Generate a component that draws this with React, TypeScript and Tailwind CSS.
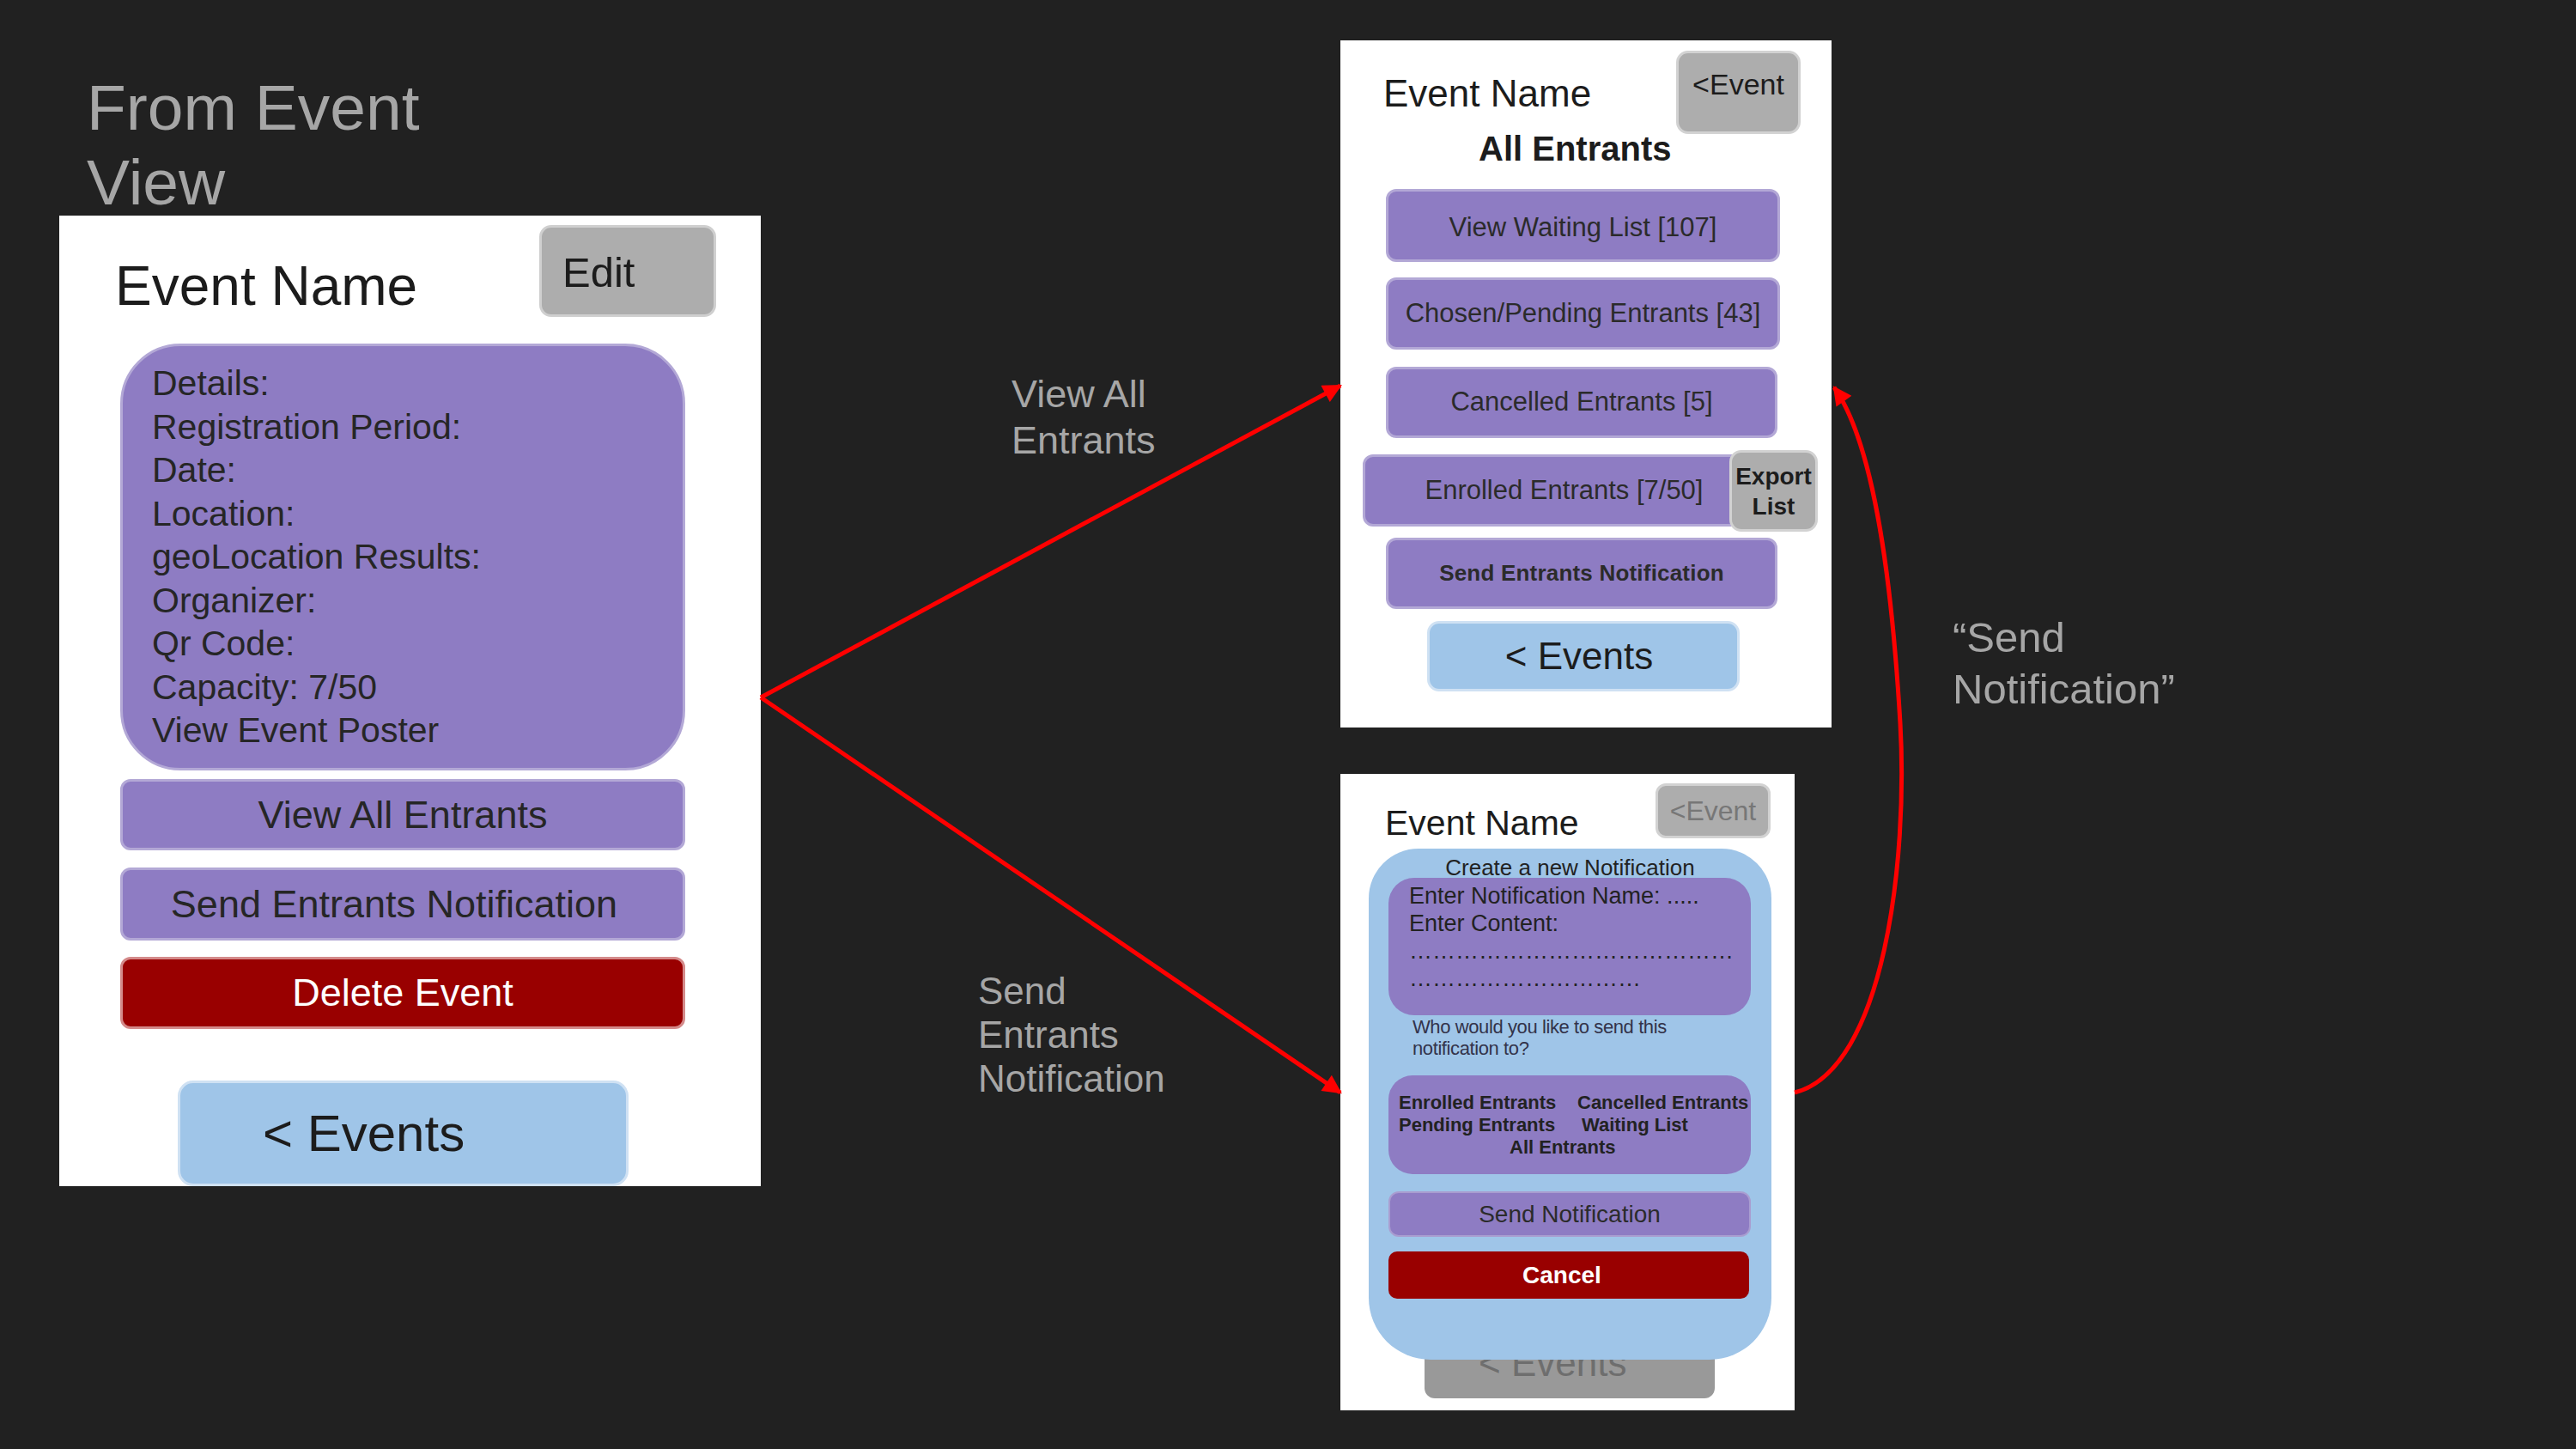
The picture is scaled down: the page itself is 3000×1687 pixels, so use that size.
const details = [
  'Details:',
  'Registration Period:',
  'Date:',
  'Location:',
  'geoLocation Results:',
  'Organizer:',
  'Qr Code:',
  'Capacity: 7/50',
  'View Event Poster',
];

// left: the event view screen with its title
function EventColumn() {
  return (
    <div className="ml-[69px] flex w-[817px] shrink-0 flex-col">
      <div className="mt-[82px] h-[169px] pl-[32px] text-[75px] leading-[87px] text-[#a6a6a6]">
        From Event
        <br />
        View
      </div>
      <div className="flex h-[1130px] flex-col bg-white">
        <div className="flex h-[118px] items-start">
          <div className="ml-[65px] mt-[50px] text-[64px] leading-none text-[#1c1c1c]">Event Name</div>
          <div className="ml-auto mr-[52px] mt-[11px] flex h-[107px] w-[206px] items-center rounded-[14px] border-[3px] border-[#cfcfcf] bg-[#adadad] pl-[24px] pt-[4px] text-[49px] text-[#1c1c1c]">
            Edit
          </div>
        </div>
        <div className="ml-[71px] mt-[31px] h-[497px] w-[658px] rounded-[70px] border-[3px] border-[#b3a8d6] bg-[#8e7cc3] pl-[34px] pt-[18px] text-[41px] leading-[50.5px] text-[#262626]">
          {details.map((d) => (
            <div key={d}>{d}</div>
          ))}
        </div>
        <div className="ml-[71px] mt-[10px] flex h-[83px] w-[658px] items-center justify-center rounded-[12px] border-[3px] border-[#b3a8d6] bg-[#8e7cc3] text-[45px] text-[#262626]">
          View All Entrants
        </div>
        <div className="ml-[71px] mt-[20px] flex h-[85px] w-[658px] items-center justify-center rounded-[12px] border-[3px] border-[#b3a8d6] bg-[#8e7cc3] pr-[20px] text-[45px] text-[#262626]">
          Send Entrants Notification
        </div>
        <div className="ml-[71px] mt-[19px] flex h-[84px] w-[658px] items-center justify-center rounded-[12px] border-[3px] border-[#d48a8a] bg-[#990000] text-[45px] text-white">
          Delete Event
        </div>
        <div className="ml-[138px] mt-[60px] flex h-[123px] w-[525px] items-center rounded-[18px] border-[3px] border-[#cfe1f3] bg-[#9fc5e8] pl-[96px] text-[60px] text-[#1c1c1c]">
          &lt; Events
        </div>
      </div>
    </div>
  );
}

function PurpleRow({ children, className }: { children: React.ReactNode; className: string }) {
  return (
    <div
      className={
        'flex items-center justify-center rounded-[12px] border-[3px] border-[#b3a8d6] bg-[#8e7cc3] text-[#2b2b2b] ' +
        className
      }
    >
      {children}
    </div>
  );
}

function EntrantsPanel() {
  return (
    <div className="mt-[47px] flex h-[800px] w-[572px] flex-col bg-white">
      <div className="flex h-[106px] items-start">
        <div className="ml-[50px] mt-[40px] text-[44px] leading-none text-[#1c1c1c]">Event Name</div>
        <div className="ml-auto mr-[36px] mt-[12px] flex h-[97px] w-[145px] shrink-0 justify-center rounded-[14px] border-[3px] border-[#d2d2d2] bg-[#adadad] pt-[19px] text-[34px] leading-[34px] text-[#1c1c1c]">
          &lt;Event
        </div>
      </div>
      <div className="h-[40px] pl-[161px] text-[40px] font-bold leading-[40px] text-[#1c1c1c]">All Entrants</div>
      <PurpleRow className="ml-[53px] mt-[27px] h-[85px] w-[459px] pt-[6px] text-[31px]">View Waiting List [107]</PurpleRow>
      <PurpleRow className="ml-[53px] mt-[18px] h-[84px] w-[459px] text-[31px]">Chosen/Pending Entrants [43]</PurpleRow>
      <PurpleRow className="ml-[53px] mt-[20px] h-[83px] w-[456px] text-[31px]">Cancelled Entrants [5]</PurpleRow>
      <div className="mt-[14px] flex h-[95px] items-start">
        <PurpleRow className="ml-[26px] mt-[5px] h-[84px] w-[483px] pr-[14px] text-[31px]">Enrolled Entrants [7/50]</PurpleRow>
        <div className="-ml-[56px] flex h-[95px] w-[103px] flex-col items-center justify-center rounded-[14px] border-[3px] border-[#d2d2d2] bg-[#adadad] text-[28px] font-bold leading-[35px] text-[#1c1c1c]">
          <span>Export</span>
          <span>List</span>
        </div>
      </div>
      <PurpleRow className="ml-[53px] mt-[7px] h-[83px] w-[456px] text-[26px] font-bold tracking-[0.2px]">
        Send Entrants Notification
      </PurpleRow>
      <div className="ml-[101px] mt-[14px] flex h-[82px] w-[364px] items-center justify-center rounded-[14px] border-[3px] border-[#cfe1f3] bg-[#9fc5e8] pr-[10px] text-[44px] text-[#1c1c1c]">
        &lt; Events
      </div>
    </div>
  );
}

function NotificationPanel() {
  return (
    <div className="relative mt-[54px] h-[741px] w-[529px] bg-white">
      <div className="flex h-[75px] items-start">
        <div className="ml-[52px] mt-[37px] text-[41px] leading-none text-[#1c1c1c]">Event Name</div>
        <div className="ml-auto mr-[28px] mt-[11px] flex h-[64px] w-[134px] items-center justify-center rounded-[12px] border-[3px] border-[#d2d2d2] bg-[#adadad] text-[32px] text-[#777777]">
          &lt;Event
        </div>
      </div>
      <div className="ml-[98px] mt-[570px] flex h-[82px] w-[338px] items-center rounded-[12px] bg-[#999999] pl-[63px] text-[44px] text-[#6e6e6e]">
        &lt; Events
      </div>

      {/* modal over the entrants screen */}
      <div className="absolute left-[33px] top-[87px] flex h-[595px] w-[469px] flex-col rounded-t-[58px] rounded-b-[72px] bg-[#9fc5e8]">
        <div className="h-[34px] pt-[9px] text-center text-[26px] leading-[26px] text-[#222222]">Create a new Notification</div>
        <div className="ml-[23px] h-[160px] w-[422px] overflow-hidden rounded-[30px] bg-[#8e7cc3] pl-[24px] pt-[5px] text-[27px] leading-[32px] text-[#222222]">
          <div>Enter Notification Name: .....</div>
          <div>Enter Content:</div>
          <div className="whitespace-nowrap">{'…'.repeat(14)}</div>
          <div className="whitespace-nowrap">{'…'.repeat(10)}</div>
        </div>
        <div className="ml-[51px] mt-[1px] text-[22px] leading-[25px] tracking-[-0.4px] text-[#33334a]">
          Who would you like to send this
          <br />
          notification to?
        </div>
        <div className="ml-[23px] mt-[19px] h-[115px] w-[422px] rounded-[28px] bg-[#8e7cc3] pt-[19px] text-[22px] font-bold leading-[26px] text-[#222222]">
          <div className="grid grid-cols-[208px_1fr] pl-[12px]">
            <span>Enrolled Entrants</span>
            <span>Cancelled Entrants</span>
            <span>Pending Entrants</span>
            <span className="pl-[5px]">Waiting List</span>
          </div>
          <div className="pl-[141px]">All Entrants</div>
        </div>
        <div className="ml-[23px] mt-[20px] flex h-[53px] w-[422px] items-center justify-center rounded-[12px] border-[2px] border-[#a99dd0] bg-[#8e7cc3] text-[28px] text-[#2b2b2b]">
          Send Notification
        </div>
        <div className="ml-[23px] mt-[17px] flex h-[55px] w-[420px] items-center justify-center rounded-[10px] bg-[#990000] pr-[16px] text-[28px] font-bold text-white">
          Cancel
        </div>
      </div>
    </div>
  );
}

function Arrows() {
  return (
    <svg
      className="pointer-events-none absolute left-0 top-0"
      width="3000"
      height="1687"
      viewBox="0 0 3000 1687"
    >
      <defs>
        <marker
          id="head"
          viewBox="0 0 10 10"
          refX="9"
          refY="5"
          markerWidth="30"
          markerHeight="22"
          markerUnits="userSpaceOnUse"
          orient="auto"
        >
          <path d="M0,0 L10,5 L0,10 z" fill="#ff0000" />
        </marker>
      </defs>
      <g stroke="#ff0000" strokeWidth="5" fill="none">
        <line x1="886" y1="812" x2="1561" y2="449" markerEnd="url(#head)" />
        <line x1="886" y1="812" x2="1561" y2="1272" markerEnd="url(#head)" />
        <path
          d="M2090,1272 C2195,1245 2222,1000 2213,842 C2204,690 2185,520 2136,451"
          markerEnd="url(#head)"
        />
      </g>
    </svg>
  );
}

export default function App() {
  return (
    <div className="relative flex h-[1687px] w-[3000px] overflow-hidden bg-[#212121] font-['Liberation_Sans',Arial,sans-serif]">
      <EventColumn />
      <div className="flex w-[675px] shrink-0 flex-col text-[45px] text-[#a6a6a6]">
        <div className="ml-[292px] mt-[432px] leading-[54px]">
          View All
          <br />
          Entrants
        </div>
        <div className="ml-[253px] mt-[588px] text-[44px] leading-[51px]">
          Send
          <br />
          Entrants
          <br />
          Notification
        </div>
      </div>
      <div className="flex w-[572px] shrink-0 flex-col">
        <EntrantsPanel />
        <NotificationPanel />
      </div>
      <div className="ml-[141px] mt-[712px] self-start text-[49px] leading-[60px] text-[#a6a6a6]">
        “Send
        <br />
        Notification”
      </div>
      <Arrows />
    </div>
  );
}
